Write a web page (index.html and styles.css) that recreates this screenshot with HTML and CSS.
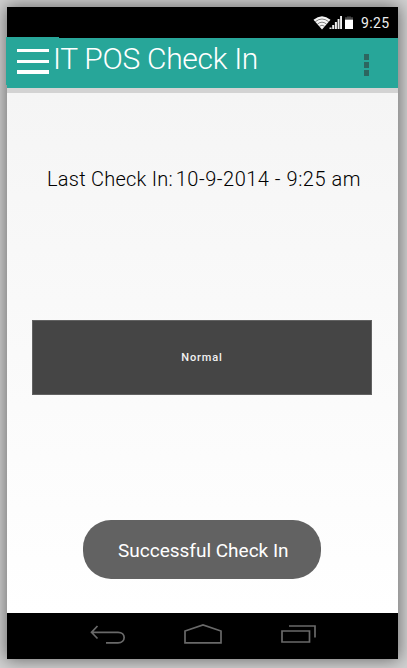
FILE: index.html
```html
<!DOCTYPE html>
<html lang="en">
<head>
<meta charset="utf-8">
<title>IT POS Check In</title>
<link rel="stylesheet" href="styles.css">
</head>
<body>
<div class="phone">
  <div class="status">
    <svg class="status-icons" width="42" height="16" viewBox="0 0 42 16">
      <path d="M0.5 4.8Q9 -2.5 17.5 4.8L9 14.5Z" fill="#f4f4f4"/>
      <path d="M2.3 6.7Q9 1.3 15.7 6.7M4.5 9Q9 5.4 13.5 9M6.5 11.2Q9 9.2 11.5 11.2" fill="none" stroke="#000" stroke-opacity=".6" stroke-width=".8"/>
      <path d="M16.5 14v-1.5h2V14zM19.2 14v-4h2v4zM21.9 14V7h2v7zM24.6 14V4h1.9v10zM27.1 14V1h1.9v13z" fill="#eee"/>
      <path d="M32 4V2.3h2V1.5h4v.8h2V4z" fill="#444"/>
      <path d="M32 4.5h8V14h-8z" fill="#fff"/>
    </svg>
    <span class="clock">9:25</span>
  </div>
  <header class="appbar">
    <div class="menu"><i></i><i></i><i></i></div>
    <h1 class="title">IT POS Check In</h1>
    <div class="more"><i></i><i></i><i></i></div>
  </header>
  <main class="content">
    <p class="last">Last Check In: <span class="date">10-9-2014 - 9:25 am</span></p>
    <button class="normal">Normal</button>
    <div class="toast">Successful Check In</div>
  </main>
  <nav class="nav">
    <svg width="38" height="22" viewBox="0 0 38 22"><path d="M9.5 2L3.5 8.3L9.5 14.5M3.5 8.3H30C38.2 8.3 38.2 18.8 30 18.8H18"/></svg>
    <svg width="40" height="22" viewBox="0 0 40 22"><path d="M2 18.8V7L20 1L38 7V18.8Z"/></svg>
    <svg width="38" height="22" viewBox="0 0 38 22"><path d="M2 7H29.5V18H2ZM9 2H35V13.5"/></svg>
  </nav>
</div>
</body>
</html>
```
FILE: styles.css
```css
* {
  box-sizing: border-box;
}

body {
  margin: 0;
  height: 668px;
  padding: 7px 9px 9px 7px;
  background: #d2d2d2;
  font-family: Roboto, sans-serif;
  overflow: hidden;
}

.phone {
  display: flex;
  flex-direction: column;
  width: 391px;
  height: 652px;
  box-shadow: 0 0 16px 1px rgba(0, 0, 0, .5);
}

.status {
  display: flex;
  height: 31px;
  padding: 9px 0 0 306px;
  background: #000;
}

.status-icons {
  margin-top: -1px;
}

.clock {
  margin: -2px 0 0 6px;
  color: #eee;
  font-size: 14px;
  line-height: 18px;
  letter-spacing: .4px;
}

.appbar {
  position: relative;
  display: flex;
  height: 50px;
  background: #27a699;
}

.appbar::before {
  content: "";
  position: absolute;
  left: -1px;
  top: -1px;
  width: 53px;
  height: 48px;
  background: #27a699;
}

.menu {
  position: relative;
  display: flex;
  flex-direction: column;
  gap: 8px;
  width: 32px;
  margin: 11px 0 0 10px;
}

.menu i {
  height: 3px;
  background: #fff;
}

.menu i:last-child {
  height: 4px;
  margin-top: -1px;
}

.title {
  position: relative;
  width: 300px;
  margin: 0 0 0 4px;
  color: #fff;
  font-size: 30px;
  font-weight: 300;
  line-height: 42px;
  letter-spacing: -.3px;
  white-space: nowrap;
}

.more {
  display: flex;
  flex-direction: column;
  gap: 2px;
  width: 5px;
  margin: 16px 0 0 11px;
}

.more i {
  height: 6px;
  background: #2d6660;
}

.content {
  display: flex;
  flex-direction: column;
  height: 525px;
  border-top: 5px solid #d3d3d3;
  background: linear-gradient(#f5f5f5, #fafafa 50%, #fff);
}

.last {
  margin: 74px 0 0 40px;
  color: #000;
  font-size: 20px;
  font-weight: 300;
  line-height: 24px;
  letter-spacing: .25px;
  white-space: nowrap;
}

.date {
  margin-left: -2.5px;
  letter-spacing: .52px;
}

.normal {
  width: 340px;
  height: 75px;
  margin: 129px 0 0 25px;
  padding: 0;
  border: 1px solid #626262;
  background: #454545;
  color: #f2f2f2;
  font: 500 11px/18px Roboto, sans-serif;
  letter-spacing: .9px;
}

.toast {
  width: 238px;
  height: 59px;
  margin: 125px 0 0 76px;
  padding-left: 35px;
  border-radius: 28px;
  background: #626262;
  color: #fff;
  font-size: 19px;
  line-height: 61px;
  white-space: nowrap;
}

.nav {
  display: flex;
  gap: 57px;
  height: 46px;
  padding: 11px 0 0 81px;
  background: #000;
}

.nav svg {
  fill: none;
  stroke: #696969;
  stroke-width: 1.7;
}
```
